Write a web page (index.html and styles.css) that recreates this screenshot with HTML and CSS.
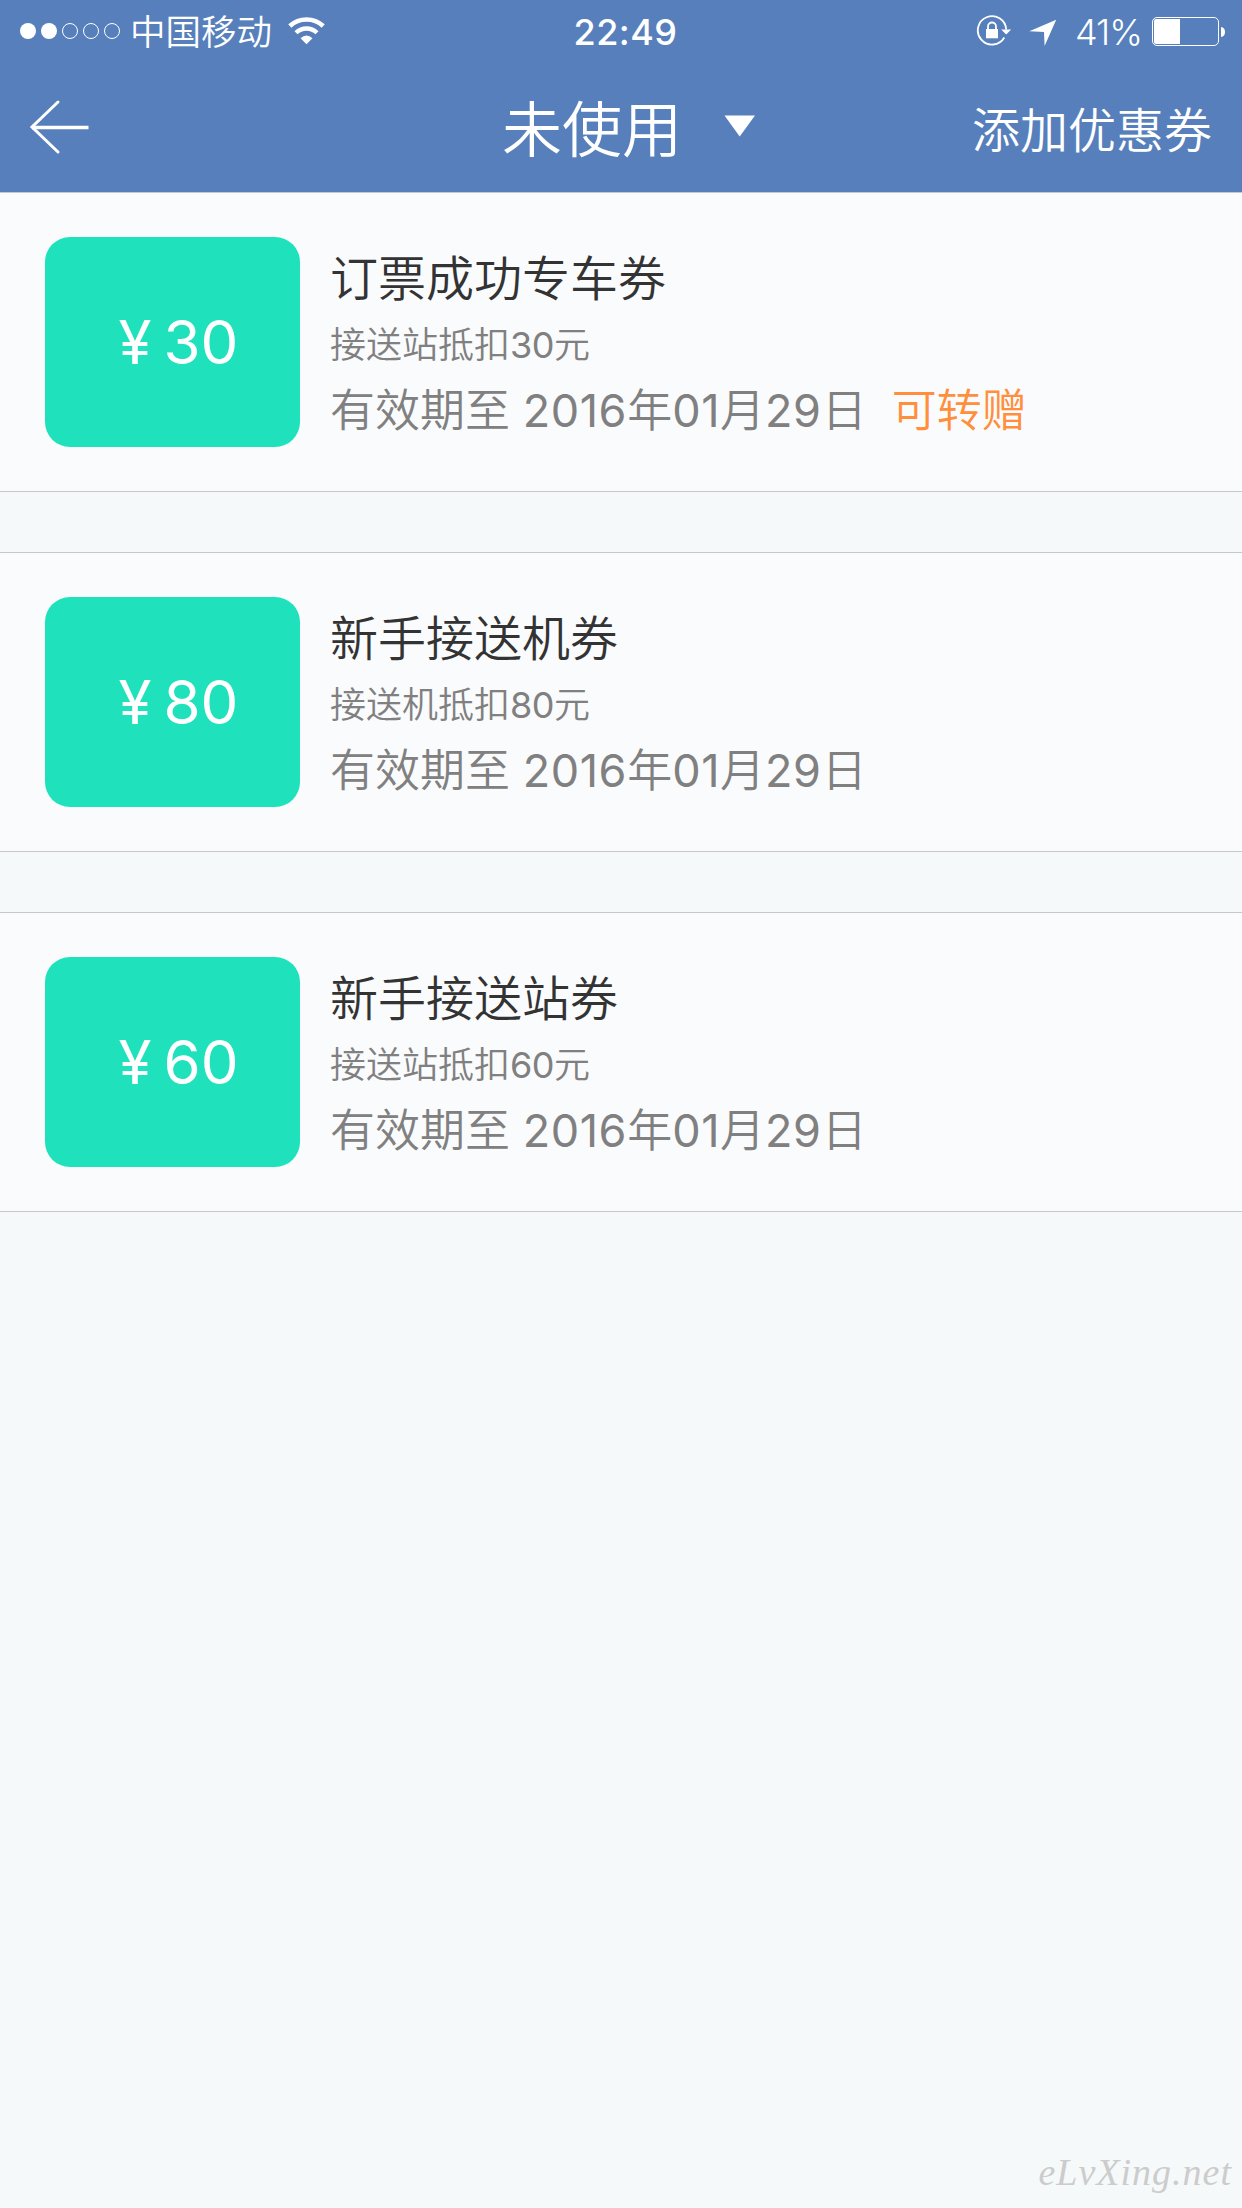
FILE: index.html
```
<!DOCTYPE html>
<html lang="zh-CN">
<head>
    <meta charset="UTF-8">
    <meta name="viewport" content="width=device-width, initial-scale=1.0">
    <title>优惠券</title>
    <link rel="stylesheet" href="styles.css">
</head>
<body>
    <header class="header">
        <div class="status-bar">
            <div class="status-left">
                <svg class="signal" width="100" height="18" viewBox="0 0 100 18">
                    <circle cx="8" cy="9" r="8" fill="#fff"/>
                    <circle cx="29" cy="9" r="8" fill="#fff"/>
                    <circle cx="50" cy="9" r="7.5" fill="none" stroke="#fff"/>
                    <circle cx="71" cy="9" r="7.5" fill="none" stroke="#fff"/>
                    <circle cx="92" cy="9" r="7.5" fill="none" stroke="#fff"/>
                </svg>
                <span class="carrier">中国移动</span>
                <svg class="wifi" width="38" height="28" viewBox="0 0 38 28">
                    <path d="M1.8 9 A24.5 24.5 0 0 1 35.2 9" fill="none" stroke="#fff" stroke-width="4.6"/>
                    <path d="M8 15.8 A15 15 0 0 1 29 15.8" fill="none" stroke="#fff" stroke-width="4.4"/>
                    <path d="M12.5 21.3 Q18.5 15.5 24.5 21.3 L18.5 27.3 Z" fill="#fff"/>
                </svg>
            </div>
            <span class="time">22:49</span>
            <div class="status-right">
                <svg class="lock" width="36" height="32" viewBox="0 0 36 32">
                    <path d="M28.3 22.5 A14.2 14.2 0 1 1 30.2 14.5" fill="none" stroke="#fff" stroke-width="1.8"/>
                    <path d="M25.2 14.5 H35.2 L30.2 19.5 Z" fill="#fff"/>
                    <rect x="10" y="14" width="12" height="9.3" fill="#fff"/>
                    <path d="M12 14.5 V11.5 A4 4 0 0 1 20 11.5 V14.5" fill="none" stroke="#fff" stroke-width="1.8"/>
                </svg>
                <svg class="location" width="28" height="28" viewBox="0 0 28 28">
                    <path d="M27.2 0.7 L0.3 12.3 L15 13 L15.6 27 Z" fill="#fff"/>
                </svg>
                <span class="percent">41%</span>
                <svg class="battery" width="74" height="30" viewBox="0 0 74 30">
                    <rect x="0.5" y="0.5" width="66" height="28" rx="4.5" fill="none" stroke="#fff"/>
                    <path d="M4 2 H28 V27 H4 Q2 27 2 25 V4 Q2 2 4 2 Z" fill="#fff"/>
                    <path d="M69 10 Q73 10.5 73 15 Q73 19.5 69 20 Z" fill="#fff"/>
                </svg>
            </div>
        </div>
        <nav class="nav-bar">
            <a class="back">
                <svg width="62" height="56" viewBox="0 0 62 56">
                    <path d="M30 3 L4 28 L30 53" fill="none" stroke="#fff" stroke-width="3" stroke-linecap="round"/>
                    <path d="M4 28.5 H60.5" stroke="#fff" stroke-width="3.4"/>
                </svg>
            </a>
            <div class="filter">
                <h1>未使用</h1>
                <svg width="32" height="22" viewBox="0 0 32 22">
                    <path d="M0.5 0.5 H31 L15.7 21.5 Z" fill="#fff"/>
                </svg>
            </div>
            <a class="add">添加优惠券</a>
        </nav>
    </header>

    <main class="coupon-list">
        <section class="coupon">
            <div class="amount"><span class="yen">¥</span><span>30</span></div>
            <div class="info">
                <h2>订票成功专车券</h2>
                <p class="desc">接送站抵扣<span class="num">30</span>元</p>
                <p class="expiry">有效期至 <span class="num">2016</span>年<span class="num">01</span>月<span class="num">29</span>日<span class="gift">可转赠</span></p>
            </div>
        </section>
        <section class="coupon">
            <div class="amount"><span class="yen">¥</span><span>80</span></div>
            <div class="info">
                <h2>新手接送机券</h2>
                <p class="desc">接送机抵扣<span class="num">80</span>元</p>
                <p class="expiry">有效期至 <span class="num">2016</span>年<span class="num">01</span>月<span class="num">29</span>日</p>
            </div>
        </section>
        <section class="coupon">
            <div class="amount"><span class="yen">¥</span><span>60</span></div>
            <div class="info">
                <h2>新手接送站券</h2>
                <p class="desc">接送站抵扣<span class="num">60</span>元</p>
                <p class="expiry">有效期至 <span class="num">2016</span>年<span class="num">01</span>月<span class="num">29</span>日</p>
            </div>
        </section>
    </main>

    <footer class="watermark">eLvXing.net</footer>
</body>
</html>
```

FILE: styles.css
```
* {
    box-sizing: border-box;
    margin: 0;
    padding: 0;
}
body {
    display: flex;
    flex-direction: column;
    min-height: 2208px;
    background: #f5f9fa;
    color: #333;
    font-family: Inter, "Noto Sans CJK SC", sans-serif;
    font-weight: 350;
}
svg {
    display: block;
    flex: none;
}
.header {
    height: 192px;
    background: #567fbb;
    color: #fff;
}

/* status bar */
.status-bar {
    display: grid;
    grid-template-columns: 555px 141px 1fr;
    align-items: center;
    height: 60px;
    font-size: 36px;
    line-height: 60px;
}
.status-left,
.status-right {
    display: flex;
    align-items: center;
    height: 60px;
    white-space: nowrap;
}
.status-left {
    padding-left: 20px;
}
.carrier {
    margin-left: 10px;
    padding-top: 3px;
    font-size: 35.5px;
}
.wifi {
    margin-left: 16px;
}
.time {
    padding-top: 2px;
    text-align: center;
    font-weight: 500;
    letter-spacing: 0.5px;
}
.status-right {
    justify-content: flex-end;
    padding-right: 16px;
}
.location {
    margin-left: 17px;
    margin-top: 3px;
}
.percent {
    width: 68px;
    margin-left: 18px;
    padding-top: 2px;
    letter-spacing: -1px;
}
.battery {
    margin-left: 9px;
    margin-top: 2px;
}

/* navigation bar */
.nav-bar {
    display: grid;
    grid-template-columns: 502px 1fr auto;
    align-items: center;
    height: 132px;
    padding-right: 30px;
}
.back {
    padding: 2px 0 0 28px;
}
.filter {
    display: flex;
    align-items: center;
    height: 132px;
}
.filter h1 {
    padding-top: 8px;
    font-size: 60px;
    font-weight: 350;
    line-height: 124px;
}
.filter svg {
    margin-left: 42px;
}
.add {
    padding-top: 1px;
    font-size: 48px;
}

/* coupons */
.coupon-list {
    display: flex;
    flex-direction: column;
    gap: 60px;
}
.coupon {
    display: flex;
    height: 300px;
    padding: 44px 45px;
    background: #fafbfd;
    border-top: 1px solid #c8c8cc;
    border-bottom: 1px solid #c8c8cc;
}
.amount {
    display: flex;
    align-items: center;
    justify-content: center;
    gap: 12px;
    width: 255px;
    height: 210px;
    padding-left: 12px;
    border-radius: 25px;
    background: #1fe2bd;
    color: #fff;
    font-size: 60px;
    font-weight: 400;
}
.info {
    padding: 7px 0 0 30px;
    white-space: nowrap;
}
.info h2 {
    font-size: 48px;
    font-weight: 350;
    line-height: 70px;
}
.desc {
    font-size: 36px;
    line-height: 62px;
    color: #808080;
}
.expiry {
    font-size: 45px;
    line-height: 70px;
    color: #808080;
}
.num {
    font-weight: 400;
}
.desc .num {
    letter-spacing: -0.5px;
}
.expiry .num {
    letter-spacing: 0.6px;
}
.gift {
    margin-left: 25px;
    color: #ff8f3c;
}

.watermark {
    margin-top: auto;
    padding: 0 10px 12px 0;
    text-align: right;
    font-family: "Liberation Serif", serif;
    font-style: italic;
    font-weight: 400;
    font-size: 38px;
    line-height: 48px;
    letter-spacing: 1px;
    color: #ccc;
}
```
